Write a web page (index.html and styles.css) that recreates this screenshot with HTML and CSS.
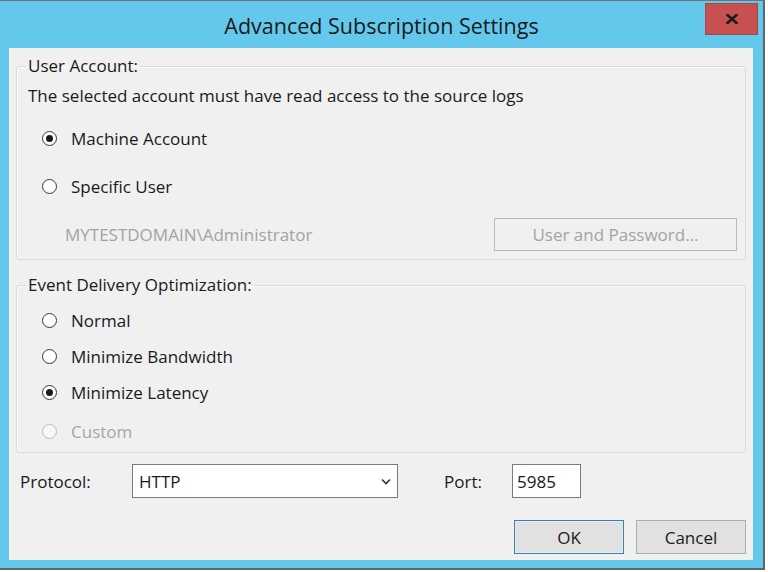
FILE: index.html
```html
<!DOCTYPE html>
<html lang="en">
<head>
<meta charset="utf-8">
<title>Advanced Subscription Settings</title>
<link rel="stylesheet" href="styles.css">
</head>
<body>
<div class="window">
  <div class="titlebar">
    <div class="title">Advanced Subscription Settings</div>
    <button class="close" type="button" aria-label="Close">
      <svg width="12" height="10" viewBox="0 0 12 10"><path d="M1.5 1 L10.5 9 M10.5 1 L1.5 9" stroke="#1c1c1c" stroke-width="2.6" stroke-linecap="square" fill="none"/></svg>
    </button>
  </div>
  <div class="client">
    <fieldset class="group account">
      <legend>User Account:</legend>
      <div class="desc">The selected account must have read access to the source logs</div>
      <div class="radio row48"><span class="circle checked"></span><span>Machine Account</span></div>
      <div class="radio row48"><span class="circle"></span><span>Specific User</span></div>
      <div class="domain-row">
        <span class="domain">MYTESTDOMAIN\Administrator</span>
        <button class="btn disabled" type="button">User and Password...</button>
      </div>
    </fieldset>
    <fieldset class="group delivery">
      <legend>Event Delivery Optimization:</legend>
      <div class="radio row36"><span class="circle"></span><span>Normal</span></div>
      <div class="radio row36"><span class="circle"></span><span>Minimize Bandwidth</span></div>
      <div class="radio row36"><span class="circle checked"></span><span>Minimize Latency</span></div>
      <div class="radio row42 off"><span class="circle"></span><span>Custom</span></div>
    </fieldset>
    <div class="proto-row">
      <span class="lbl lbl-proto">Protocol:</span>
      <div class="select"><span>HTTP</span>
        <svg width="10" height="7" viewBox="0 0 10 7"><path d="M1 1.5 L5 5.5 L9 1.5" stroke="#333" stroke-width="1.6" fill="none"/></svg>
      </div>
      <span class="lbl lbl-port">Port:</span>
      <div class="input">5985</div>
    </div>
    <div class="btn-row">
      <button class="btn default" type="button">OK</button>
      <button class="btn" type="button">Cancel</button>
    </div>
  </div>
</div>
</body>
</html>
```
FILE: styles.css
```css
* { box-sizing: border-box; }
html, body { margin: 0; padding: 0; background: #ffffff; }
body {
  width: 768px;
  height: 572px;
  overflow: hidden;
  font-family: "Open Sans", "Noto Sans", sans-serif;
  font-size: 17px;
  color: #1a1a1a;
}
.window {
  width: 765px;
  height: 570px;
  background: #63c8eb;
  border-top: 1px solid #6e7478;
  border-right: 2px solid #5d666b;
  border-bottom: 2px solid #5d666b;
  display: flex;
  flex-direction: column;
}
.titlebar {
  height: 47px;
  display: grid;
  grid-template-areas: "t";
}
.title {
  grid-area: t;
  justify-self: center;
  align-self: center;
  font-size: 21.5px;
  color: #1a1a1a;
  margin-top: 1px;
}
.close {
  grid-area: t;
  justify-self: end;
  align-self: start;
  margin: 2px 5px 0 0;
  width: 53px;
  height: 32px;
  background: #c75050;
  border: 1px solid #a84545;
  padding: 0;
  display: flex;
  align-items: center;
  justify-content: center;
}
.client {
  flex: 1;
  margin: 0 10px 8px 9px;
  background: #f0f0f0;
  padding: 8px 7px 6px 7px;
  display: flex;
  flex-direction: column;
}
.group {
  margin: 0;
  padding: 0;
  min-inline-size: 0;
  border: 1px solid #d9dcde;
  border-radius: 3px;
  box-shadow: inset 1px 1px 0 #fbfbfb;
}
.group legend {
  margin-left: 9px;
  padding: 0 2px;
  line-height: 20px;
  height: 20px;
  font-size: 17px;
}
.delivery { margin-top: 15px; }
.delivery .radio:first-of-type { margin-top: 7px; }
.desc {
  height: 38px;
  display: flex;
  align-items: center;
  padding-left: 11px;
}
.radio {
  display: flex;
  align-items: center;
  gap: 14px;
  padding-left: 25px;
}
.row48 { height: 48px; }
.row36 { height: 36px; }
.row42 { height: 42px; }
.circle {
  width: 15px;
  height: 15px;
  border-radius: 50%;
  border: 1px solid #3a3a3a;
  background: radial-gradient(circle at 50% 40%, #ffffff 55%, #e6e6e6 100%);
  display: flex;
  align-items: center;
  justify-content: center;
  flex: none;
}
.circle.checked::after {
  content: "";
  width: 7px;
  height: 7px;
  border-radius: 50%;
  background: #1a1a1a;
}
.off { color: #a6a6a6; }
.off .circle { border-color: #bcbcbc; background: #f7f7f7; }
.domain-row {
  height: 49px;
  display: flex;
  align-items: center;
  justify-content: space-between;
  padding-left: 48px;
  padding-right: 8px;
}
.domain { color: #a3a3a3; }
.btn {
  font-family: inherit;
  font-size: 17px;
  color: #1a1a1a;
  width: 110px;
  height: 34px;
  background: #e1e1e1;
  border: 1px solid #adadad;
  padding: 0;
}
.btn.disabled {
  width: 243px;
  height: 33px;
  background: #f0f0f0;
  border-color: #b8b8b8;
  color: #a3a3a3;
}
.btn.default {
  border-color: #3c7fb1;
  box-shadow: inset 0 0 0 1px #e6eef5;
}
.proto-row {
  margin-top: 11px;
  height: 34px;
  display: flex;
  align-items: center;
}
.lbl-proto { width: 116px; padding-left: 4px; }
.select {
  width: 266px;
  height: 34px;
  background: #ffffff;
  border: 1px solid #7a7a7a;
  display: flex;
  align-items: center;
  justify-content: space-between;
  padding: 0 6px 0 6px;
}
.lbl-port { margin-left: 46px; width: 68px; }
.input {
  width: 69px;
  height: 34px;
  background: #ffffff;
  border: 1px solid #7a7a7a;
  display: flex;
  align-items: center;
  padding-left: 4px;
}
.btn-row {
  margin-top: 22px;
  display: flex;
  justify-content: flex-end;
  gap: 12px;
}
```
